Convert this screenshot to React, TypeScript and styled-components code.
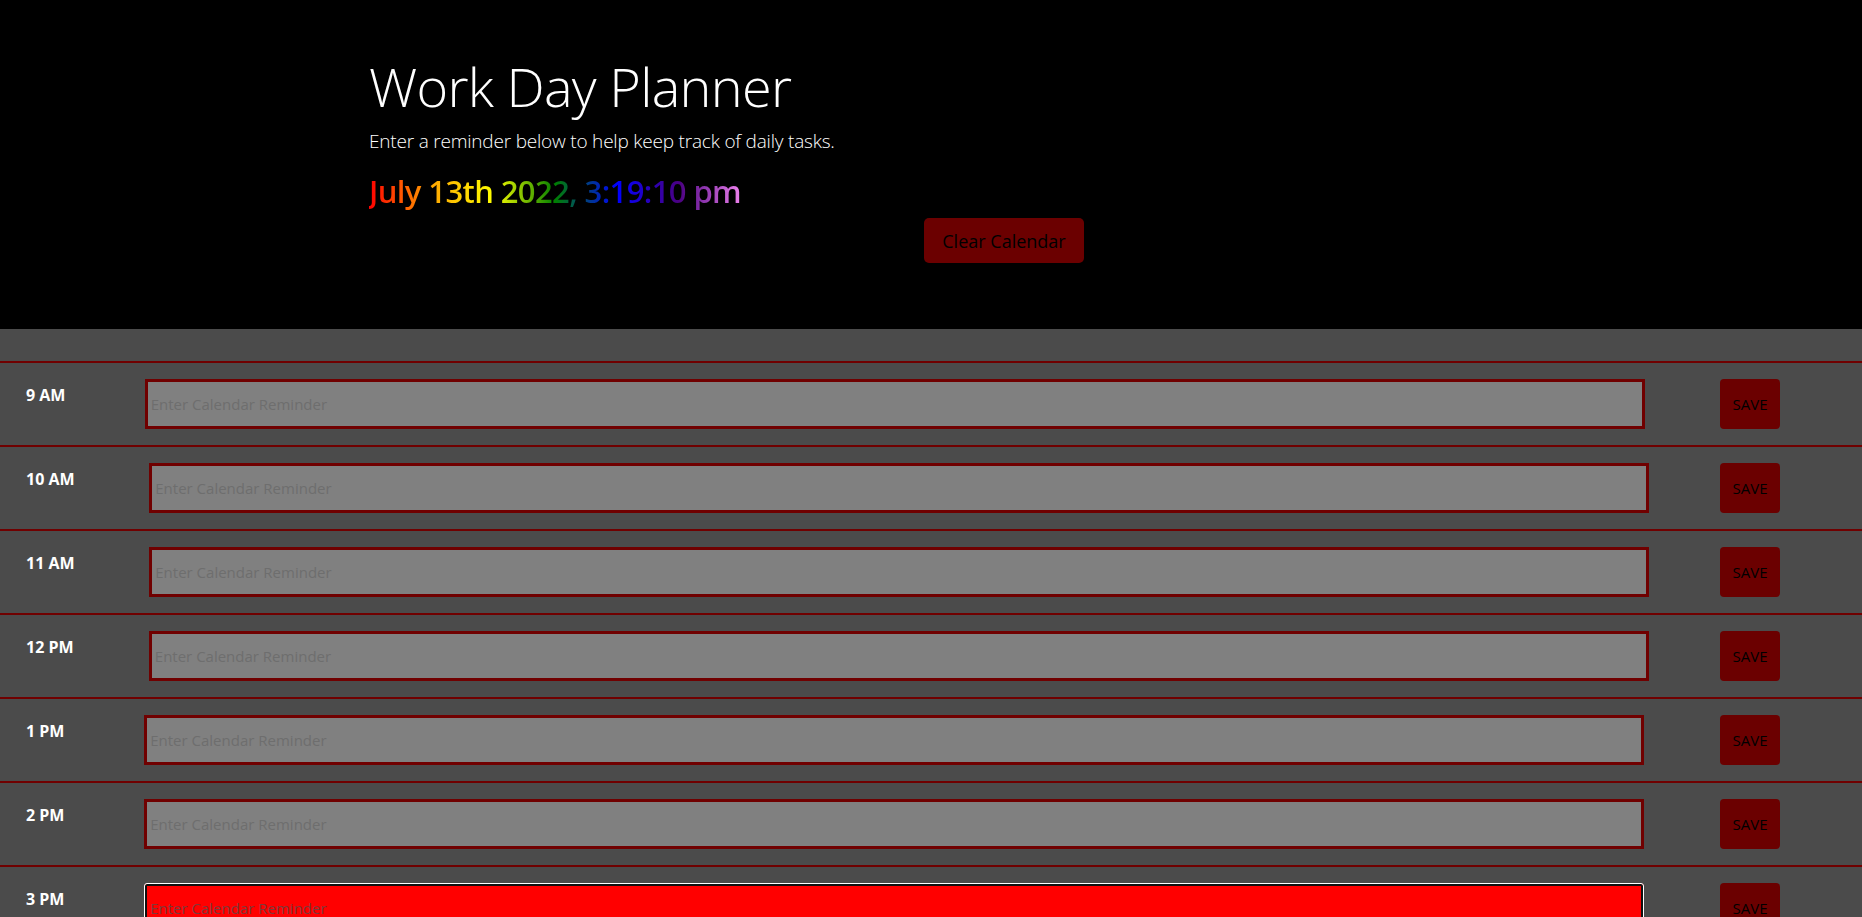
import React from "react";
import styled, { createGlobalStyle } from "styled-components";

const GlobalStyle = createGlobalStyle`
  html, body {
    margin: 0;
    padding: 0;
    background: #4b4b4b;
  }
  * { box-sizing: border-box; }
`;

const Page = styled.div`
  font-family: "Open Sans", "Noto Sans", sans-serif;
  min-height: 100vh;
  background: #4b4b4b;
`;

const Header = styled.header`
  background: #000;
  height: 329px;
  padding: 53px 0 0 369px;
  display: flex;
  flex-direction: column;
  align-items: flex-start;
`;

const Title = styled.h1`
  margin: 0;
  font-family: "Open Sans", sans-serif;
  font-weight: 300;
  font-size: 54px;
  line-height: 67px;
  color: #fff;
  letter-spacing: -0.7px;
`;

const Lead = styled.p`
  margin: 6px 0 0;
  font-family: "Open Sans", sans-serif;
  font-weight: 300;
  font-size: 19px;
  line-height: 30px;
  color: #fff;
  letter-spacing: -0.2px;
`;

const DateLine = styled.p`
  margin: 16px 0 0;
  font-family: "Open Sans", sans-serif;
  font-weight: 600;
  font-size: 31px;
  line-height: 38px;
  letter-spacing: -0.6px;
  background: linear-gradient(to right, red, orange, yellow, green, blue, indigo, violet);
  -webkit-background-clip: text;
  background-clip: text;
  color: transparent;
`;

const ClearRow = styled.div`
  width: 1270px;
  display: flex;
  justify-content: center;
  margin-top: 8px;
`;

const ClearButton = styled.button`
  width: 160px;
  height: 45px;
  border: none;
  border-radius: 5px;
  background: #6b0000;
  color: #000;
  font-family: "Open Sans", sans-serif;
  font-size: 18px;
  font-weight: 400;
  padding: 0;
  cursor: pointer;
`;

const Rows = styled.main`
  padding-top: 32px;
  display: flex;
  flex-direction: column;
`;

const Row = styled.section`
  border-top: 2px solid #700000;
  height: 84px;
  padding: 16px 82px 16px 26px;
  display: flex;
  align-items: flex-start;
  justify-content: space-between;
`;

const Hour = styled.div`
  padding: 4px 4px 0 0;
  font-family: "Open Sans", sans-serif;
  font-weight: 700;
  font-size: 16px;
  line-height: 24px;
  color: #fff;
  white-space: nowrap;
`;

type Status = "past" | "present" | "future";

const bgFor = (s: Status) =>
  s === "past" ? "#808080" : s === "present" ? "#ff0000" : "#77dd77";

const Entry = styled.input<{ $status: Status; $focused?: boolean }>`
  width: 1500px;
  height: 50px;
  margin: 0;
  padding: 0 2px 0 3px;
  background: ${(p) => bgFor(p.$status)};
  border: ${(p) => (p.$focused ? "1px solid #fff" : "3px solid #700000")};
  border-radius: ${(p) => (p.$focused ? "3px" : "0")};
  box-shadow: ${(p) => (p.$focused ? "inset 0 0 0 2px #101010" : "none")};
  ${(p) => (p.$focused ? "padding-left: 5px;" : "")}
  font-family: "Open Sans", sans-serif;
  font-size: 15px;
  color: #000;
  outline: none;
  &::placeholder {
    color: ${(p) => (p.$status === "present" ? "#7d3a3a" : "#6e6e6e")};
    opacity: 1;
  }
`;

const SaveButton = styled.button`
  width: 60px;
  height: 50px;
  border: none;
  border-radius: 4px;
  background: #6b0000;
  color: #000;
  font-family: "Open Sans", sans-serif;
  font-size: 15px;
  padding: 0;
  cursor: pointer;
`;

const hours = [
  { label: "9 AM", status: "past" as Status },
  { label: "10 AM", status: "past" as Status },
  { label: "11 AM", status: "past" as Status },
  { label: "12 PM", status: "past" as Status },
  { label: "1 PM", status: "past" as Status },
  { label: "2 PM", status: "past" as Status },
  { label: "3 PM", status: "present" as Status },
  { label: "4 PM", status: "future" as Status },
  { label: "5 PM", status: "future" as Status },
];

export default function App() {
  return (
    <Page>
      <GlobalStyle />
      <Header>
        <Title>Work Day Planner</Title>
        <Lead>Enter a reminder below to help keep track of daily tasks.</Lead>
        <DateLine>July 13th 2022, 3:19:10 pm</DateLine>
        <ClearRow>
          <ClearButton>Clear Calendar</ClearButton>
        </ClearRow>
      </Header>
      <Rows>
        {hours.map((h) => (
          <Row key={h.label}>
            <Hour>{h.label}</Hour>
            <Entry
              $status={h.status}
              $focused={h.status === "present"}
              placeholder="Enter Calendar Reminder"
            />
            <SaveButton>SAVE</SaveButton>
          </Row>
        ))}
      </Rows>
    </Page>
  );
}
